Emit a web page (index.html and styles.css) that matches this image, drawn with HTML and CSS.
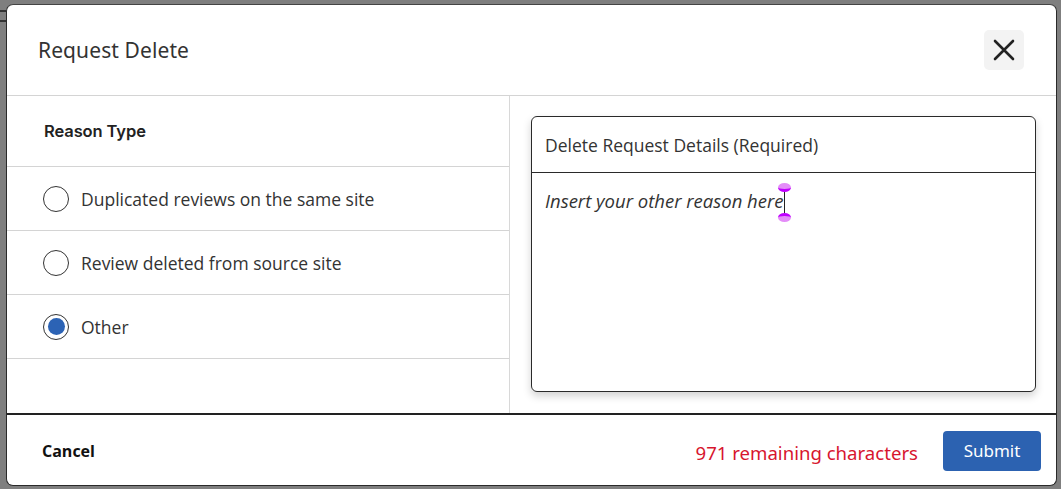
FILE: index.html
```html
<!DOCTYPE html>
<html>
<head>
<meta charset="utf-8">
<link rel="stylesheet" href="styles.css">
</head>
<body>
<div class="backdrop">
  <div class="bg-lines">
    <div class="bg-line l1"></div>
    <div class="bg-line l2"></div>
  </div>
  <div class="modal">
    <div class="modal-header">
      <h1 class="title">Request Delete</h1>
      <button class="close-btn" aria-label="Close">
        <svg width="22" height="22" viewBox="0 0 22 22"><path d="M2 2 L20 20 M20 2 L2 20" stroke="#222" stroke-width="2.6" stroke-linecap="round"/></svg>
      </button>
    </div>
    <div class="modal-body">
      <div class="left">
        <div class="reason-head">Reason Type</div>
        <label class="row"><span class="radio"></span><span>Duplicated reviews on the same site</span></label>
        <label class="row"><span class="radio"></span><span>Review deleted from source site</span></label>
        <label class="row"><span class="radio checked"></span><span>Other</span></label>
      </div>
      <div class="right">
        <div class="card">
          <div class="card-head">Delete Request Details (Required)</div>
          <div class="card-body">
            <span class="placeholder">Insert your other reason here</span><span class="caret"><span class="handle top"></span><span class="handle bottom"></span></span>
          </div>
        </div>
      </div>
    </div>
    <div class="modal-footer">
      <button class="cancel">Cancel</button>
      <div class="footer-right">
        <span class="remaining">971 remaining characters</span>
        <button class="submit">Submit</button>
      </div>
    </div>
  </div>
</div>
</body>
</html>
```

FILE: styles.css
```css
html, body {
  margin: 0;
  padding: 0;
  height: 100%;
}
body {
  font-family: "Open Sans", "Noto Sans", sans-serif;
  background: #7f7f7f;
}
.backdrop {
  position: relative;
  height: 489px;
  padding: 4px 4px 3px 6px;
  box-sizing: border-box;
}
.bg-lines {
  position: absolute;
  inset: 0;
}
.bg-line {
  position: absolute;
  left: 0;
  width: 6px;
  height: 2px;
  background: #333;
}
.l1 { top: 10px; }
.l2 { top: 20px; }
.modal {
  position: relative;
  height: 100%;
  background: #fff;
  border: 1px solid #2a2a2a;
  border-top-color: #444;
  border-radius: 7px;
  display: flex;
  flex-direction: column;
  box-sizing: border-box;
  overflow: hidden;
}
.modal-header {
  height: 91px;
  flex: none;
  display: flex;
  align-items: center;
  justify-content: space-between;
  padding: 0 32px 0 31px;
  border-bottom: 1px solid #d4d4d4;
  box-sizing: border-box;
}
.title {
  margin: 0;
  font-family: "Noto Sans", sans-serif;
  font-weight: 400;
  font-size: 21px;
  color: #333;
  letter-spacing: 0.1px;
}
.close-btn {
  width: 40px;
  height: 40px;
  border: none;
  border-radius: 5px;
  background: #f3f3f3;
  display: flex;
  align-items: center;
  justify-content: center;
  padding: 0;
}
.modal-body {
  flex: 1;
  display: flex;
  border-bottom: 2px solid #222;
}
.left {
  width: 502px;
  flex: none;
  border-right: 1px solid #d8d8d8;
}
.reason-head {
  height: 71px;
  display: flex;
  align-items: center;
  padding-left: 37px;
  font-family: "Inter", sans-serif;
  font-weight: 600;
  font-size: 16.5px;
  color: #222;
  letter-spacing: -0.1px;
  border-bottom: 1px solid #d4d4d4;
  box-sizing: border-box;
}
.row {
  height: 64px;
  display: flex;
  align-items: center;
  gap: 12px;
  padding-left: 36px;
  font-size: 17.5px;
  color: #333;
  border-bottom: 1px solid #d4d4d4;
  box-sizing: border-box;
}
.radio {
  width: 26px;
  height: 26px;
  border: 1.5px solid #333;
  border-radius: 50%;
  box-sizing: border-box;
  flex: none;
  display: flex;
  align-items: center;
  justify-content: center;
}
.radio.checked::after {
  content: "";
  width: 17px;
  height: 17px;
  border-radius: 50%;
  background: #2c63b5;
}
.right {
  flex: 1;
  padding: 20px 20px 21px 21px;
}
.card {
  height: 276px;
  border: 1px solid #2a2a2a;
  border-radius: 6px;
  box-shadow: 0 4px 8px rgba(0,0,0,0.18);
  display: flex;
  flex-direction: column;
  box-sizing: border-box;
}
.card-head {
  height: 56px;
  display: flex;
  align-items: center;
  padding-left: 13px;
  font-size: 17.5px;
  color: #333;
  border-bottom: 1px solid #2a2a2a;
  box-sizing: border-box;
}
.card-body {
  padding: 13px 13px;
  font-size: 18.5px;
  color: #333;
  line-height: 30px;
}
.placeholder {
  font-style: italic;
}
.caret {
  position: relative;
  display: inline-block;
  width: 1px;
  height: 27px;
  background: #222;
  vertical-align: -8px;
}
.handle {
  position: absolute;
  left: -6px;
  width: 13px;
  height: 9px;
  border-radius: 50%;
  background: #e48cf8;
}
.handle.top { top: -6px; border-bottom: 3px solid #c000ff; box-sizing: border-box; }
.handle.bottom { bottom: -6px; border-top: 3px solid #c000ff; box-sizing: border-box; }
.modal-footer {
  flex: none;
  height: 71px;
  display: flex;
  align-items: center;
  justify-content: space-between;
  padding: 0 15px 0 35px;
  box-sizing: border-box;
}
.cancel {
  border: none;
  background: none;
  font-family: "Open Sans", sans-serif;
  font-weight: 700;
  font-size: 16px;
  color: #111;
  padding: 0;
}
.footer-right {
  display: flex;
  align-items: center;
  gap: 25px;
}
.remaining {
  font-family: "Noto Sans", sans-serif;
  font-size: 18.6px;
  color: #d7152e;
  margin-top: 3px;
}
.submit {
  width: 98px;
  height: 40px;
  border: none;
  border-radius: 4px;
  background: #2c62b1;
  color: #fff;
  font-family: "Noto Sans", sans-serif;
  font-size: 17px;
  padding: 0;
}
```
